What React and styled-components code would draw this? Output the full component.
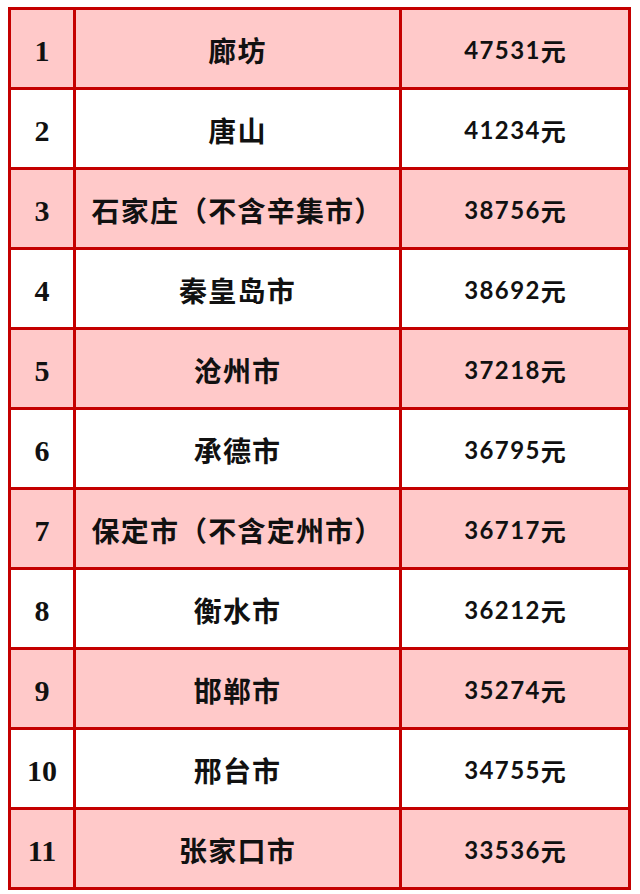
import styled, { createGlobalStyle } from "styled-components";

const rows = [
    ["1", "廊坊", "47531"],
    ["2", "唐山", "41234"],
    ["3", "石家庄（不含辛集市）", "38756"],
    ["4", "秦皇岛市", "38692"],
    ["5", "沧州市", "37218"],
    ["6", "承德市", "36795"],
    ["7", "保定市（不含定州市）", "36717"],
    ["8", "衡水市", "36212"],
    ["9", "邯郸市", "35274"],
    ["10", "邢台市", "34755"],
    ["11", "张家口市", "33536"],
];

const GlobalStyle = createGlobalStyle`
body {
    margin: 0;
    background: #ffffff;
}
`

const Page = styled.div`
padding: 7px 9px 7px 8px;
`

const Table = styled.div`
display: grid;
grid-template-columns: 62px 323px 226px;
grid-auto-rows: 77px;
gap: 3px;
padding: 3px;
background-color: #c40000;
width: max-content;
`

const Cell = styled.div`
display: flex;
align-items: center;
justify-content: center;
background-color: ${(p) => (p.$pink ? "#ffc9c9" : "#ffffff")};
color: #111111;
`

const Rank = styled(Cell)`
font-family: "Liberation Serif", "Noto Sans CJK SC", serif;
font-weight: 700;
font-size: 30px;
padding-top: 5px;
`

const City = styled(Cell)`
font-family: "Noto Sans CJK SC", sans-serif;
font-weight: 700;
font-size: 28px;
letter-spacing: 1.2px;
padding-top: 2px;
`

const Amount = styled(Cell)`
font-family: Lato, "Noto Sans CJK SC", sans-serif;
font-weight: 700;
font-size: 24px;
letter-spacing: 1.4px;
padding-top: 2px;
`

const Yuan = styled.span`
font-family: "Noto Sans CJK SC", sans-serif;
font-weight: 700;
font-size: 25px;
letter-spacing: 0;
`

const App = () => {
    return (
        <>
            <GlobalStyle />
            <Page>
                <Table>
                    {rows.map(([rank, city, amount], i) => {
                        const pink = i % 2 === 0;
                        return [
                            <Rank key={rank + "r"} $pink={pink}>{rank}</Rank>,
                            <City key={rank + "c"} $pink={pink}>{city}</City>,
                            <Amount key={rank + "a"} $pink={pink}>
                                {amount}<Yuan>元</Yuan>
                            </Amount>,
                        ];
                    })}
                </Table>
            </Page>
        </>
    );
};

export default App;
